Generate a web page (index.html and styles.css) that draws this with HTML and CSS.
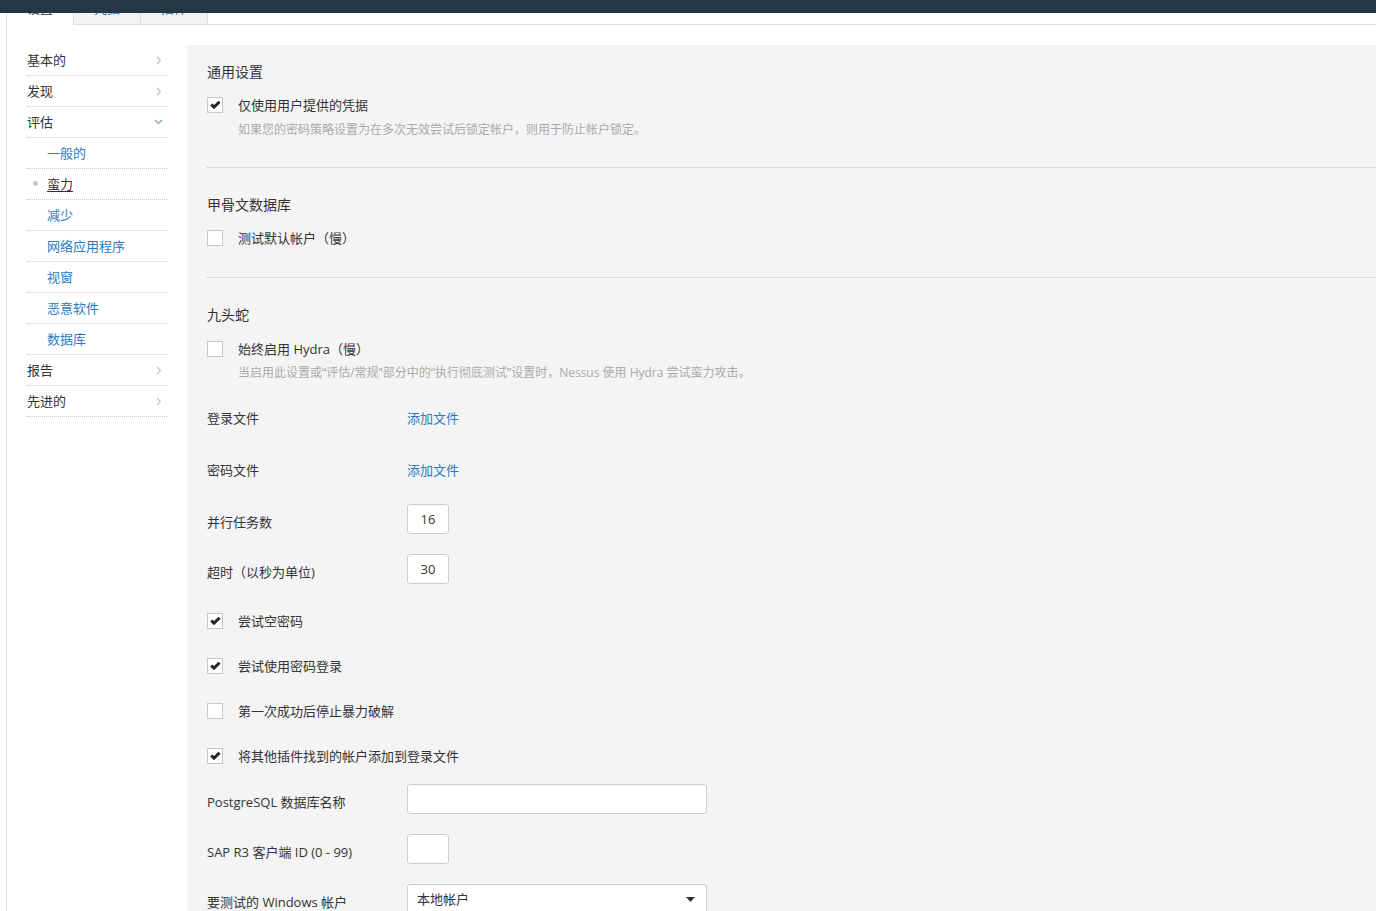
FILE: index.html
```html
<!DOCTYPE html>
<html lang="zh-CN">
<head>
<meta charset="utf-8">
<title>策略设置</title>
<link rel="stylesheet" href="styles.css">
</head>
<body>
<div class="topbar"></div>
<div class="page">
  <div class="tabs">
    <div class="tab active">设置</div>
    <div class="tab">凭据</div>
    <div class="tab tab-last">插件</div>
    <div class="tab-rest"></div>
  </div>
  <div class="content">
    <nav class="side">
      <a class="nav-item">基本的<svg class="chev" width="6" height="9" viewBox="0 0 6 9"><path d="M1 1l3.5 3.5L1 8" /></svg></a>
      <a class="nav-item">发现<svg class="chev" width="6" height="9" viewBox="0 0 6 9"><path d="M1 1l3.5 3.5L1 8" /></svg></a>
      <a class="nav-item">评估<svg class="chev-down" width="9" height="6" viewBox="0 0 9 6"><path d="M1 1l3.5 3.5L8 1" /></svg></a>
      <a class="nav-item sub">一般的</a>
      <a class="nav-item sub current"><span class="dot"></span><span class="u">蛮力</span></a>
      <a class="nav-item sub">减少</a>
      <a class="nav-item sub">网络应用程序</a>
      <a class="nav-item sub">视窗</a>
      <a class="nav-item sub">恶意软件</a>
      <a class="nav-item sub">数据库</a>
      <a class="nav-item">报告<svg class="chev" width="6" height="9" viewBox="0 0 6 9"><path d="M1 1l3.5 3.5L1 8" /></svg></a>
      <a class="nav-item">先进的<svg class="chev" width="6" height="9" viewBox="0 0 6 9"><path d="M1 1l3.5 3.5L1 8" /></svg></a>
    </nav>
    <main class="panel">
      <h3 class="sec-title">通用设置</h3>
      <div class="check-row mt15"><span class="box checked"><svg width="14" height="14" viewBox="0 0 14 14"><path d="M2.2 7.4L4.3 5.4 6 7.1 10.5 2.8 12.6 4.8 6 11.2z" /></svg></span><span>仅使用用户提供的凭据</span></div>
      <div class="help mt7">如果您的密码策略设置为在多次无效尝试后锁定帐户，则用于防止帐户锁定。</div>
      <div class="divider mt28"></div>

      <h3 class="sec-title mt28">甲骨文数据库</h3>
      <div class="check-row mt15"><span class="box"></span><span>测试默认帐户（慢）</span></div>
      <div class="divider mt30"></div>

      <h3 class="sec-title mt28">九头蛇</h3>
      <div class="check-row mt16"><span class="box"></span><span>始终启用 Hydra（慢）</span></div>
      <div class="help mt6">当启用此设置或“评估/常规”部分中的“执行彻底测试”设置时，Nessus 使用 Hydra 尝试蛮力攻击。</div>

      <div class="frow mt18"><span class="flabel">登录文件</span><a class="link">添加文件</a></div>
      <div class="frow mt22"><span class="flabel">密码文件</span><a class="link">添加文件</a></div>
      <div class="frow mt22"><span class="flabel">并行任务数</span><span class="input small">16</span></div>
      <div class="frow mt20"><span class="flabel">超时（以秒为单位)</span><span class="input small">30</span></div>

      <div class="check-row mt28"><span class="box checked"><svg width="14" height="14" viewBox="0 0 14 14"><path d="M2.2 7.4L4.3 5.4 6 7.1 10.5 2.8 12.6 4.8 6 11.2z" /></svg></span><span>尝试空密码</span></div>
      <div class="check-row mt27"><span class="box checked"><svg width="14" height="14" viewBox="0 0 14 14"><path d="M2.2 7.4L4.3 5.4 6 7.1 10.5 2.8 12.6 4.8 6 11.2z" /></svg></span><span>尝试使用密码登录</span></div>
      <div class="check-row mt27"><span class="box"></span><span>第一次成功后停止暴力破解</span></div>
      <div class="check-row mt27"><span class="box checked"><svg width="14" height="14" viewBox="0 0 14 14"><path d="M2.2 7.4L4.3 5.4 6 7.1 10.5 2.8 12.6 4.8 6 11.2z" /></svg></span><span>将其他插件找到的帐户添加到登录文件</span></div>

      <div class="frow mt19"><span class="flabel">PostgreSQL 数据库名称</span><span class="input wide"></span></div>
      <div class="frow mt20"><span class="flabel">SAP R3 客户端 ID (0 - 99)</span><span class="input small"></span></div>
      <div class="frow mt20"><span class="flabel">要测试的 Windows 帐户</span><span class="input wide select"><span>本地帐户</span><svg width="9" height="5" viewBox="0 0 9 5"><path d="M0 0h9L4.5 5z" /></svg></span></div>
    </main>
  </div>
</div>
</body>
</html>
```

FILE: styles.css
```css
html, body {
  margin: 0;
  padding: 0;
}
body {
  height: 911px;
  overflow: hidden;
  background: #fff;
  color: #333;
  font-family: "Open Sans", "Noto Sans CJK SC", sans-serif;
  font-size: 13px;
}
.topbar {
  position: fixed;
  top: 0;
  left: 0;
  right: 0;
  height: 13px;
  background: #253746;
  z-index: 10;
}
.page {
  margin-left: 6px;
  border-left: 1px solid #ddd;
  height: 911px;
  display: flex;
  flex-direction: column;
}
.tabs {
  display: flex;
  height: 25px;
  flex: none;
}
.tab {
  box-sizing: border-box;
  width: 67px;
  height: 25px;
  line-height: 16px;
  text-align: center;
  color: #2b7bc0;
  background: #f3f3f3;
  border-left: 1px solid #ddd;
  border-bottom: 1px solid #ddd;
}
.tab.active {
  width: 66px;
  background: #fff;
  border: none;
  color: #333;
}
.tab-last {
  border-right: 1px solid #ddd;
  width: 68px;
}
.tab-rest {
  flex: 1;
  border-bottom: 1px solid #ddd;
}
.content {
  flex: 1;
  display: flex;
  padding-top: 20px;
  min-height: 0;
}
.side {
  flex: none;
  width: 140px;
  margin: 0 20px;
  display: flex;
  flex-direction: column;
}
.nav-item {
  display: flex;
  align-items: center;
  justify-content: space-between;
  height: 30px;
  line-height: 30px;
  border-bottom: 1px dotted #c8c8c8;
  padding-right: 5px;
  color: #333;
  cursor: pointer;
}
.nav-item.sub {
  padding-left: 20px;
  justify-content: flex-start;
  color: #2b7bc0;
  position: relative;
}
.nav-item.current {
  color: #333;
}
.nav-item .u {
  text-decoration: underline;
  text-underline-offset: 2px;
}
.dot {
  position: absolute;
  left: 6px;
  top: 12px;
  width: 5px;
  height: 5px;
  border-radius: 50%;
  background: #c8c8c8;
}
.chev path, .chev-down path {
  fill: none;
  stroke-width: 1.1;
}
.chev path {
  stroke: #c0c0c0;
}
.chev-down {
  margin-right: -1px;
}
.chev-down path {
  stroke: #6f9cc4;
}
.panel {
  flex: 1;
  background: #f4f4f4;
  padding: 18px 0 0 20px;
  display: flex;
  flex-direction: column;
  min-width: 0;
}
.sec-title {
  margin: 0;
  font-size: 14px;
  font-weight: normal;
  line-height: 18px;
  color: #333;
}
.check-row {
  display: flex;
  align-items: center;
  gap: 15px;
  height: 18px;
  line-height: 18px;
}
.box {
  box-sizing: border-box;
  width: 16px;
  height: 16px;
  border: 1px solid #c8c8c8;
  background: #fff;
  display: flex;
  align-items: center;
  justify-content: center;
  flex: none;
}
.box svg path {
  fill: #262626;
}
.help {
  padding-left: 31px;
  font-size: 12px;
  line-height: 18px;
  color: #aaa;
}
.divider {
  border-top: 1px dotted #c4c4c4;
  height: 0;
}
.frow {
  display: flex;
  height: 30px;
  flex: none;
}
.flabel {
  width: 200px;
  flex: none;
  padding-top: 6px;
  line-height: 24px;
}
.link {
  color: #2b7bc0;
  padding-top: 6px;
  line-height: 24px;
  cursor: pointer;
}
.input {
  box-sizing: border-box;
  height: 30px;
  border: 1px solid #ccc;
  border-radius: 3px;
  background: #fff;
  line-height: 28px;
  color: #333;
}
.input.small {
  width: 42px;
  text-align: center;
}
.input.wide {
  width: 300px;
}
.select {
  display: flex;
  align-items: center;
  justify-content: space-between;
  padding: 0 11px 0 9px;
}
.select svg path {
  fill: #333;
}
.mt5 { margin-top: 5px; }
.mt6 { margin-top: 6px; }
.mt7 { margin-top: 7px; }
.mt15 { margin-top: 15px; }
.mt16 { margin-top: 16px; }
.mt18 { margin-top: 18px; }
.mt19 { margin-top: 19px; }
.mt20 { margin-top: 20px; }
.mt22 { margin-top: 22px; }
.mt27 { margin-top: 27px; }
.mt28 { margin-top: 28px; }
.mt29 { margin-top: 29px; }
.mt30 { margin-top: 30px; }
```
